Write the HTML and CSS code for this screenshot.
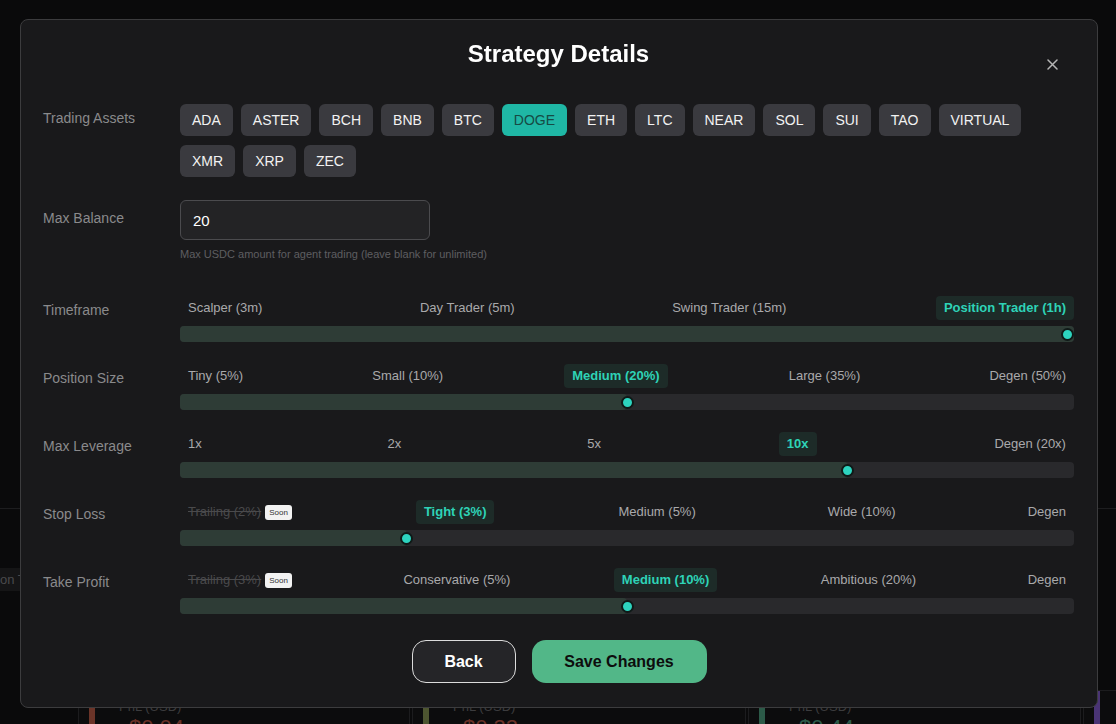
FILE: index.html
```html
<!DOCTYPE html>
<html lang="en">
<head>
<meta charset="utf-8">
<title>Strategy Details</title>
<link rel="stylesheet" href="styles.css">
</head>
<body>
<div class="page">
  <div class="bg-top"></div>
  <div class="bg-tabs"><span class="bg-tab">on T</span></div>
  <div class="bg-cards">
    <div class="bg-card"><div class="bg-bar red"></div><div class="bg-card-body"><div class="bg-label">PnL (USD)</div><div class="bg-val red-t">$0.04</div></div></div>
    <div class="bg-card"><div class="bg-bar olive"></div><div class="bg-card-body"><div class="bg-label">PnL (USD)</div><div class="bg-val red-t">$0.33</div></div></div>
    <div class="bg-card"><div class="bg-bar green"></div><div class="bg-card-body"><div class="bg-label">PnL (USD)</div><div class="bg-val green-t">$0.44</div></div></div>
    <div class="bg-card"><div class="bg-bar purple"></div></div>
  </div>
</div>

<div class="overlay">
  <div class="modal">
    <div class="modal-header">
      <h2 class="modal-title">Strategy Details</h2>
      <button class="close-btn" aria-label="Close">
        <svg width="11" height="11" viewBox="0 0 11 11"><path d="M1 1L10 10M10 1L1 10" stroke="#b5b5b5" stroke-width="1.5" stroke-linecap="round"/></svg>
      </button>
    </div>

    <div class="field field-assets">
      <div class="field-label">Trading Assets</div>
      <div class="chips">
        <span class="chip">ADA</span>
        <span class="chip">ASTER</span>
        <span class="chip">BCH</span>
        <span class="chip">BNB</span>
        <span class="chip">BTC</span>
        <span class="chip chip-active">DOGE</span>
        <span class="chip">ETH</span>
        <span class="chip">LTC</span>
        <span class="chip">NEAR</span>
        <span class="chip">SOL</span>
        <span class="chip">SUI</span>
        <span class="chip">TAO</span>
        <span class="chip">VIRTUAL</span>
        <span class="chip">XMR</span>
        <span class="chip">XRP</span>
        <span class="chip">ZEC</span>
      </div>
    </div>

    <div class="field field-balance">
      <div class="field-label label-balance">Max Balance</div>
      <div class="balance-col">
        <div class="input">20</div>
        <div class="helper">Max USDC amount for agent trading (leave blank for unlimited)</div>
      </div>
    </div>

    <div class="field field-slider first-slider">
      <div class="field-label">Timeframe</div>
      <div class="slider">
        <div class="options">
          <span class="opt">Scalper (3m)</span>
          <span class="opt">Day Trader (5m)</span>
          <span class="opt">Swing Trader (15m)</span>
          <span class="opt opt-active">Position Trader (1h)</span>
        </div>
        <div class="track">
          <div class="fill" style="width:100%"></div>
          <div class="thumb" style="left:calc(100% - 13px)"></div>
        </div>
      </div>
    </div>

    <div class="field field-slider">
      <div class="field-label">Position Size</div>
      <div class="slider">
        <div class="options">
          <span class="opt">Tiny (5%)</span>
          <span class="opt">Small (10%)</span>
          <span class="opt opt-active">Medium (20%)</span>
          <span class="opt">Large (35%)</span>
          <span class="opt">Degen (50%)</span>
        </div>
        <div class="track">
          <div class="fill" style="width:calc(6px + 0.5 * (100% - 12px))"></div>
          <div class="thumb" style="left:calc(0.5 * (100% - 12px) - 0.5px)"></div>
        </div>
      </div>
    </div>

    <div class="field field-slider">
      <div class="field-label">Max Leverage</div>
      <div class="slider">
        <div class="options">
          <span class="opt">1x</span>
          <span class="opt">2x</span>
          <span class="opt">5x</span>
          <span class="opt opt-active">10x</span>
          <span class="opt">Degen (20x)</span>
        </div>
        <div class="track">
          <div class="fill" style="width:calc(6px + 0.75 * (100% - 12px))"></div>
          <div class="thumb" style="left:calc(0.75 * (100% - 12px) - 0.5px)"></div>
        </div>
      </div>
    </div>

    <div class="field field-slider">
      <div class="field-label">Stop Loss</div>
      <div class="slider">
        <div class="options">
          <span class="opt opt-disabled"><span class="strike">Trailing (2%)</span><span class="soon">Soon</span></span>
          <span class="opt opt-active">Tight (3%)</span>
          <span class="opt">Medium (5%)</span>
          <span class="opt">Wide (10%)</span>
          <span class="opt">Degen</span>
        </div>
        <div class="track">
          <div class="fill" style="width:calc(6px + 0.25 * (100% - 12px))"></div>
          <div class="thumb" style="left:calc(0.25 * (100% - 12px) - 0.5px)"></div>
        </div>
      </div>
    </div>

    <div class="field field-slider">
      <div class="field-label">Take Profit</div>
      <div class="slider">
        <div class="options">
          <span class="opt opt-disabled"><span class="strike">Trailing (3%)</span><span class="soon">Soon</span></span>
          <span class="opt">Conservative (5%)</span>
          <span class="opt opt-active">Medium (10%)</span>
          <span class="opt">Ambitious (20%)</span>
          <span class="opt">Degen</span>
        </div>
        <div class="track">
          <div class="fill" style="width:calc(6px + 0.5 * (100% - 12px))"></div>
          <div class="thumb" style="left:calc(0.5 * (100% - 12px) - 0.5px)"></div>
        </div>
      </div>
    </div>

    <div class="footer">
      <button class="btn btn-back">Back</button>
      <button class="btn btn-save">Save Changes</button>
    </div>
  </div>
</div>
</body>
</html>
```

FILE: styles.css
```css
* { box-sizing: border-box; }

html, body {
  margin: 0;
  padding: 0;
  background: #0a0a0b;
  font-family: "Liberation Sans", Arial, sans-serif;
  overflow: hidden;
  height: 724px;
}

/* ---------- background dashboard (dimmed) ---------- */
.page {
  width: 1116px;
  height: 724px;
}
.bg-top {
  height: 509px;
  border-bottom: 1px solid #1d1d1f;
}
.bg-tabs {
  margin-top: 58px;
  height: 24px;
  display: flex;
  align-items: center;
}
.bg-tab {
  background: #151516;
  color: #4a4a4c;
  font-size: 13px;
  padding: 4px 6px 4px 0;
}
.bg-cards {
  margin-top: 99px;
  display: grid;
  grid-template-columns: 332px 334px 333px 40px;
  gap: 2px;
  padding-left: 78px;
}
.bg-card {
  height: 60px;
  background: #0c0c0d;
  border: 1px solid #1c1c1e;
  border-radius: 6px;
  display: flex;
  padding-left: 10px;
}
.bg-bar {
  width: 6px;
  height: 100%;
}
.bg-bar.red { background: #6b3428; }
.bg-bar.olive { background: #4d5530; }
.bg-bar.green { background: #2c5a48; }
.bg-bar.purple { background: #4a3475; }
.bg-card-body {
  padding: 8px 0 0 24px;
}
.bg-label {
  color: #3c3c3e;
  font-size: 13px;
  line-height: 16px;
}
.bg-val {
  font-size: 22px;
  line-height: 26px;
  margin-left: 10px;
}
.red-t { color: #6a3128; }
.green-t { color: #2d5c4b; }

/* ---------- modal ---------- */
.overlay {
  position: fixed;
  inset: 0;
}
.modal {
  position: absolute;
  left: 20px;
  top: 19px;
  width: 1078px;
  height: 689px;
  background: #19191b;
  border: 1px solid #3c3c3e;
  border-radius: 8px;
  padding: 0 23px 0 22px;
}
.modal-header {
  position: relative;
  padding-top: 21px;
  text-align: center;
}
.modal-title {
  margin: 0;
  font-size: 24px;
  line-height: 26px;
  font-weight: 700;
  color: #ffffff;
}
.close-btn {
  position: absolute;
  right: 15px;
  top: 37px;
  width: 14px;
  height: 14px;
  padding: 0;
  border: 0;
  background: transparent;
  display: flex;
  align-items: center;
  justify-content: center;
}

.field {
  display: flex;
}
.field-label {
  width: 137px;
  flex: none;
  padding-top: 6px;
  font-size: 14px;
  line-height: 16px;
  color: #8a8a8c;
}
.field-assets { margin-top: 37px; }
.field-balance { margin-top: 23px; }
.label-balance { padding-top: 10px; }

.chips {
  width: 894px;
  display: flex;
  flex-wrap: wrap;
  gap: 9px 8px;
}
.chip {
  height: 32px;
  padding: 0 12px;
  display: flex;
  align-items: center;
  background: #3a3a3f;
  color: #f2f2f2;
  font-size: 14px;
  border-radius: 6px;
}
.chip-active {
  background: #1fb7a5;
  color: #164a44;
}

.input {
  width: 250px;
  height: 40px;
  background: #232325;
  border: 1px solid #4b4b4e;
  border-radius: 6px;
  padding: 0 12px;
  display: flex;
  align-items: center;
  color: #ffffff;
  font-size: 15px;
}
.helper {
  margin-top: 7px;
  font-size: 11px;
  line-height: 14px;
  color: #5e5e61;
}

.first-slider { margin-top: 35px; }
.field-slider + .field-slider { margin-top: 22px; }

.slider {
  width: 894px;
}
.options {
  display: flex;
  justify-content: space-between;
  align-items: center;
  height: 24px;
}
.opt {
  padding: 4px 8px;
  font-size: 13px;
  line-height: 16px;
  color: #a9a9ab;
  border-radius: 4px;
  display: flex;
  align-items: center;
}
.opt-active {
  background: #1d2b28;
  color: #2ed3b7;
  font-weight: 700;
}
.opt-disabled { color: #4a4a4c; }
.strike { text-decoration: line-through; }
.soon {
  margin-left: 4px;
  background: #f2f2f2;
  color: #333;
  font-size: 8px;
  line-height: 15px;
  padding: 0 4px;
  border-radius: 3px;
  text-decoration: none;
}

.track {
  position: relative;
  margin-top: 6px;
  height: 16px;
  background: #29292c;
  border-radius: 4px;
}
.fill {
  position: absolute;
  left: 0;
  top: 0;
  bottom: 0;
  background: #2e3c36;
  border-radius: 4px;
}
.thumb {
  position: absolute;
  top: 1.5px;
  width: 13px;
  height: 13px;
  border-radius: 50%;
  background: #2dd4bf;
  border: 2px solid #0f1a18;
}

.footer {
  margin-top: 26px;
  display: flex;
  justify-content: center;
  gap: 16px;
  padding-left: 1px;
}
.btn {
  height: 43px;
  border-radius: 14px;
  font-family: "Liberation Sans", Arial, sans-serif;
  font-size: 16px;
  font-weight: 700;
  cursor: pointer;
}
.btn-back {
  width: 104px;
  background: #252528;
  border: 1px solid #dcdcdc;
  color: #ffffff;
}
.btn-save {
  width: 175px;
  background: #52b788;
  border: 0;
  color: #0d0d0d;
}
```
